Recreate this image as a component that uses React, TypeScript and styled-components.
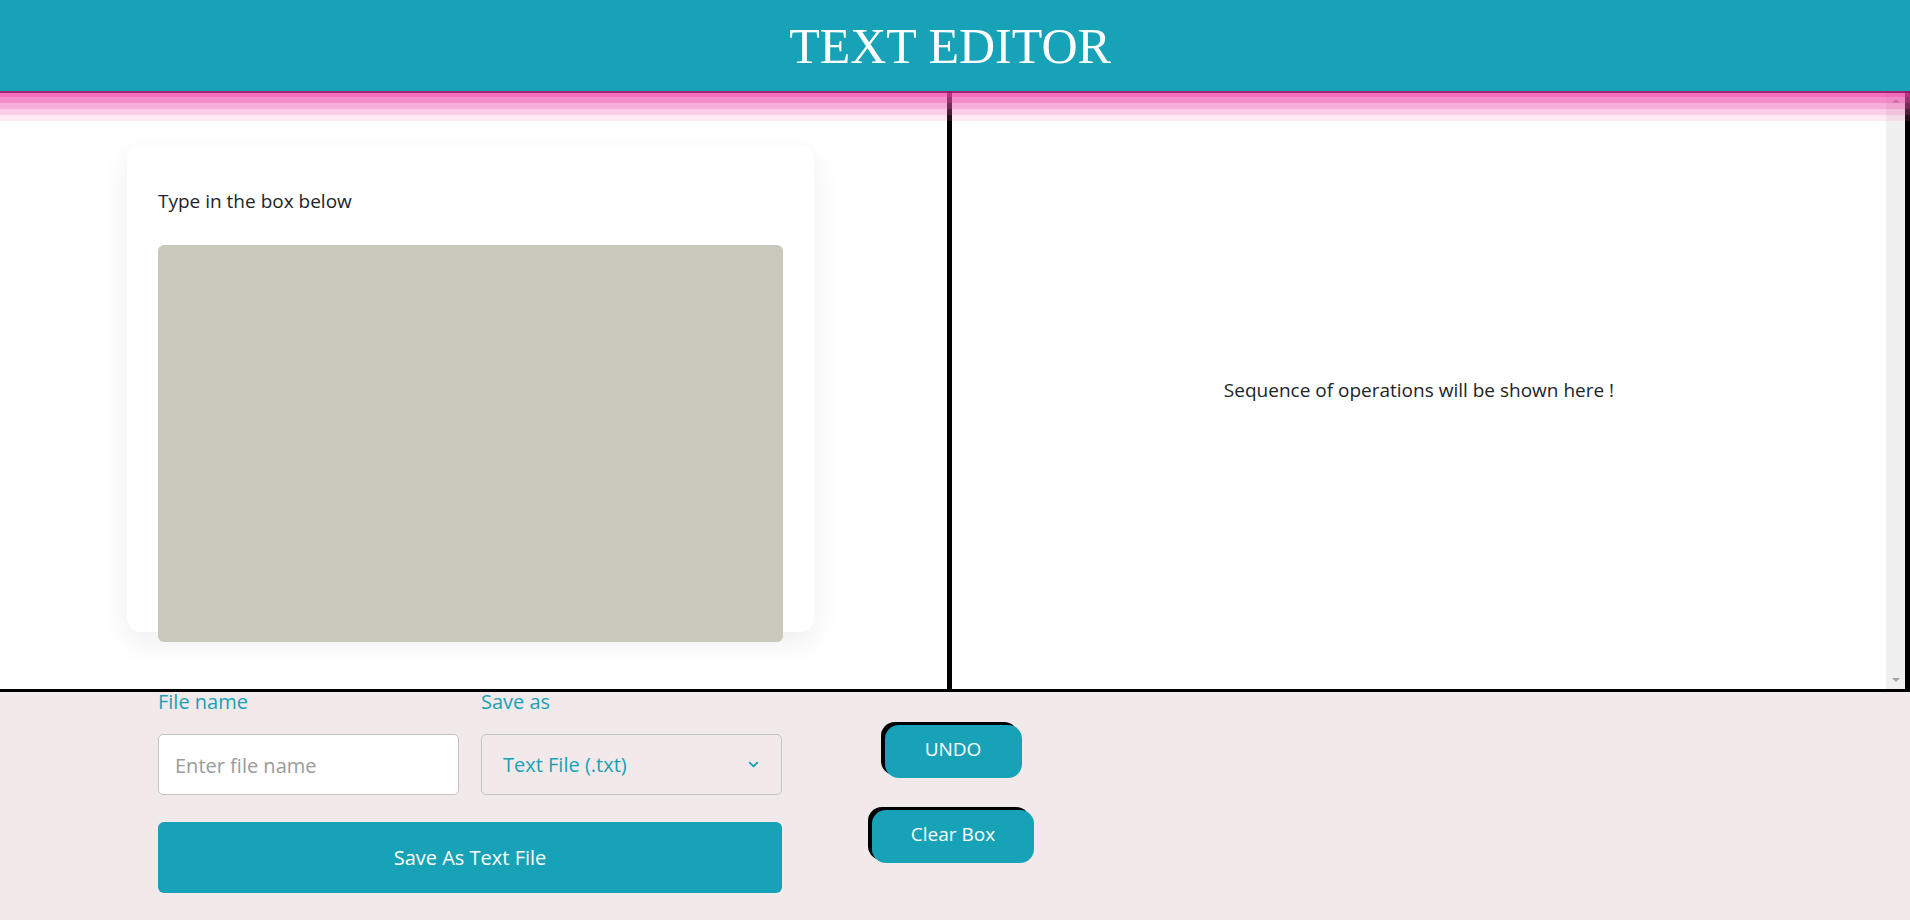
import React from "react";
import styled, { createGlobalStyle } from "styled-components";
import { ChevronDown } from "lucide-react";

const teal = "#17a2b8";

const GlobalStyle = createGlobalStyle`
  html, body {
    margin: 0;
    padding: 0;
    background: #f2e9ea;
    font-family: "Open Sans", "Noto Sans", sans-serif;
    color: #212529;
  }
  * {
    box-sizing: border-box;
  }
`;

const Header = styled.header`
  position: relative;
  z-index: 2;
  height: 91px;
  padding-right: 10px;
  background: ${teal};
  display: flex;
  align-items: center;
  justify-content: center;
  box-shadow: 0 2px 0 rgba(150, 20, 100, 0.85), 0 6px 0 rgba(240, 60, 170, 0.35),
    0 12px 0 rgba(240, 70, 170, 0.3), 0 18px 0 rgba(240, 80, 175, 0.25),
    0 24px 0 rgba(245, 90, 180, 0.2), 0 30px 0 rgba(245, 110, 190, 0.15);
`;

const Title = styled.h1`
  margin: 0;
  font-family: "Liberation Serif", "Times New Roman", serif;
  font-weight: 400;
  font-size: 50px;
  color: #fff;
`;

const Main = styled.main`
  display: flex;
  height: 601px;
  background: #fff;
  border-bottom: 3px solid #000;
`;

const LeftPane = styled.section`
  width: 947px;
  padding: 54px 0 0 127px;
`;

const Card = styled.div`
  width: 687px;
  height: 487px;
  padding: 43px 31px 0;
  background: #fff;
  border-radius: 14px;
  box-shadow: 0 10px 30px rgba(0, 0, 0, 0.07);
`;

const CardLabel = styled.p`
  margin: 0 0 31px;
  font-size: 19px;
  line-height: 26px;
`;

const TextBox = styled.textarea`
  display: block;
  width: 100%;
  height: 397px;
  border: none;
  border-radius: 6px;
  background: #c8c9bc;
  resize: none;
  font-family: inherit;
  font-size: 19px;
`;

const RightPane = styled.section`
  flex: 1;
  display: flex;
  border-left: 5px solid #000;
  border-right: 5px solid #000;
`;

const Log = styled.div`
  flex: 1;
  display: flex;
  align-items: center;
  justify-content: center;
  font-size: 19px;
`;

const Track = styled.div`
  width: 19px;
  background: #f0f0f0;
  display: flex;
  flex-direction: column;
  justify-content: space-between;
  align-items: center;
  padding: 8px 0 7px;
`;

const Arrow = styled.span<{ $down?: boolean }>`
  width: 0;
  height: 0;
  border-left: 4px solid transparent;
  border-right: 4px solid transparent;
  ${(p) => (p.$down ? "border-top" : "border-bottom")}: 4px solid #a3a3a3;
`;

const Bottom = styled.div`
  display: flex;
  padding-left: 158px;
  height: 228px;
`;

const Form = styled.div`
  width: 624px;
  display: grid;
  grid-template-columns: 301px 301px;
  column-gap: 22px;
  align-content: start;
`;

const Field = styled.label`
  display: flex;
  flex-direction: column;
`;

const FieldLabel = styled.span`
  color: ${teal};
  font-size: 20px;
  line-height: 20px;
`;

const Input = styled.input`
  margin-top: 22px;
  height: 61px;
  padding: 2px 16px 0;
  border: 1px solid #c4c4c4;
  border-radius: 5px;
  background: #fff;
  font-family: inherit;
  font-size: 20px;
  &::placeholder {
    color: #9b9b9b;
  }
`;

const SelectWrap = styled.div`
  position: relative;
  margin-top: 22px;
`;

const Select = styled.select`
  appearance: none;
  width: 100%;
  height: 61px;
  padding: 0 21px;
  border: 1px solid #c4c4c4;
  border-radius: 5px;
  background: transparent;
  color: ${teal};
  font-family: inherit;
  font-size: 20px;
`;

const Chevron = styled(ChevronDown)`
  position: absolute;
  right: 21px;
  top: 23px;
  pointer-events: none;
  color: ${teal};
`;

const SaveButton = styled.button`
  grid-column: 1 / -1;
  margin-top: 27px;
  height: 71px;
  border: none;
  border-radius: 6px;
  background: ${teal};
  color: #fff;
  font-family: inherit;
  font-size: 20px;
`;

const Actions = styled.div`
  margin-left: 71px;
  width: 200px;
  display: flex;
  flex-direction: column;
  align-items: center;
  padding-top: 33px;
  gap: 32px;
`;

const ActionButton = styled.button<{ $w: number }>`
  width: ${(p) => p.$w}px;
  height: 53px;
  padding: 0 0 6px;
  border: none;
  border-radius: 14px;
  background: ${teal};
  color: #fff;
  font-family: inherit;
  font-size: 19px;
  box-shadow: -4px -3px 0 #000;
`;

export default function App() {
  return (
    <>
      <GlobalStyle />
      <Header>
        <Title>TEXT EDITOR</Title>
      </Header>
      <Main>
        <LeftPane>
          <Card>
            <CardLabel>Type in the box below</CardLabel>
            <TextBox />
          </Card>
        </LeftPane>
        <RightPane>
          <Log>Sequence of operations will be shown here !</Log>
          <Track>
            <Arrow />
            <Arrow $down />
          </Track>
        </RightPane>
      </Main>
      <Bottom>
        <Form>
          <Field>
            <FieldLabel>File name</FieldLabel>
            <Input placeholder="Enter file name" />
          </Field>
          <Field as="div">
            <FieldLabel>Save as</FieldLabel>
            <SelectWrap>
              <Select defaultValue="txt">
                <option value="txt">Text File (.txt)</option>
              </Select>
              <Chevron size={15} strokeWidth={3} />
            </SelectWrap>
          </Field>
          <SaveButton>Save As Text File</SaveButton>
        </Form>
        <Actions>
          <ActionButton $w={137}>UNDO</ActionButton>
          <ActionButton $w={162}>Clear Box</ActionButton>
        </Actions>
      </Bottom>
    </>
  );
}
